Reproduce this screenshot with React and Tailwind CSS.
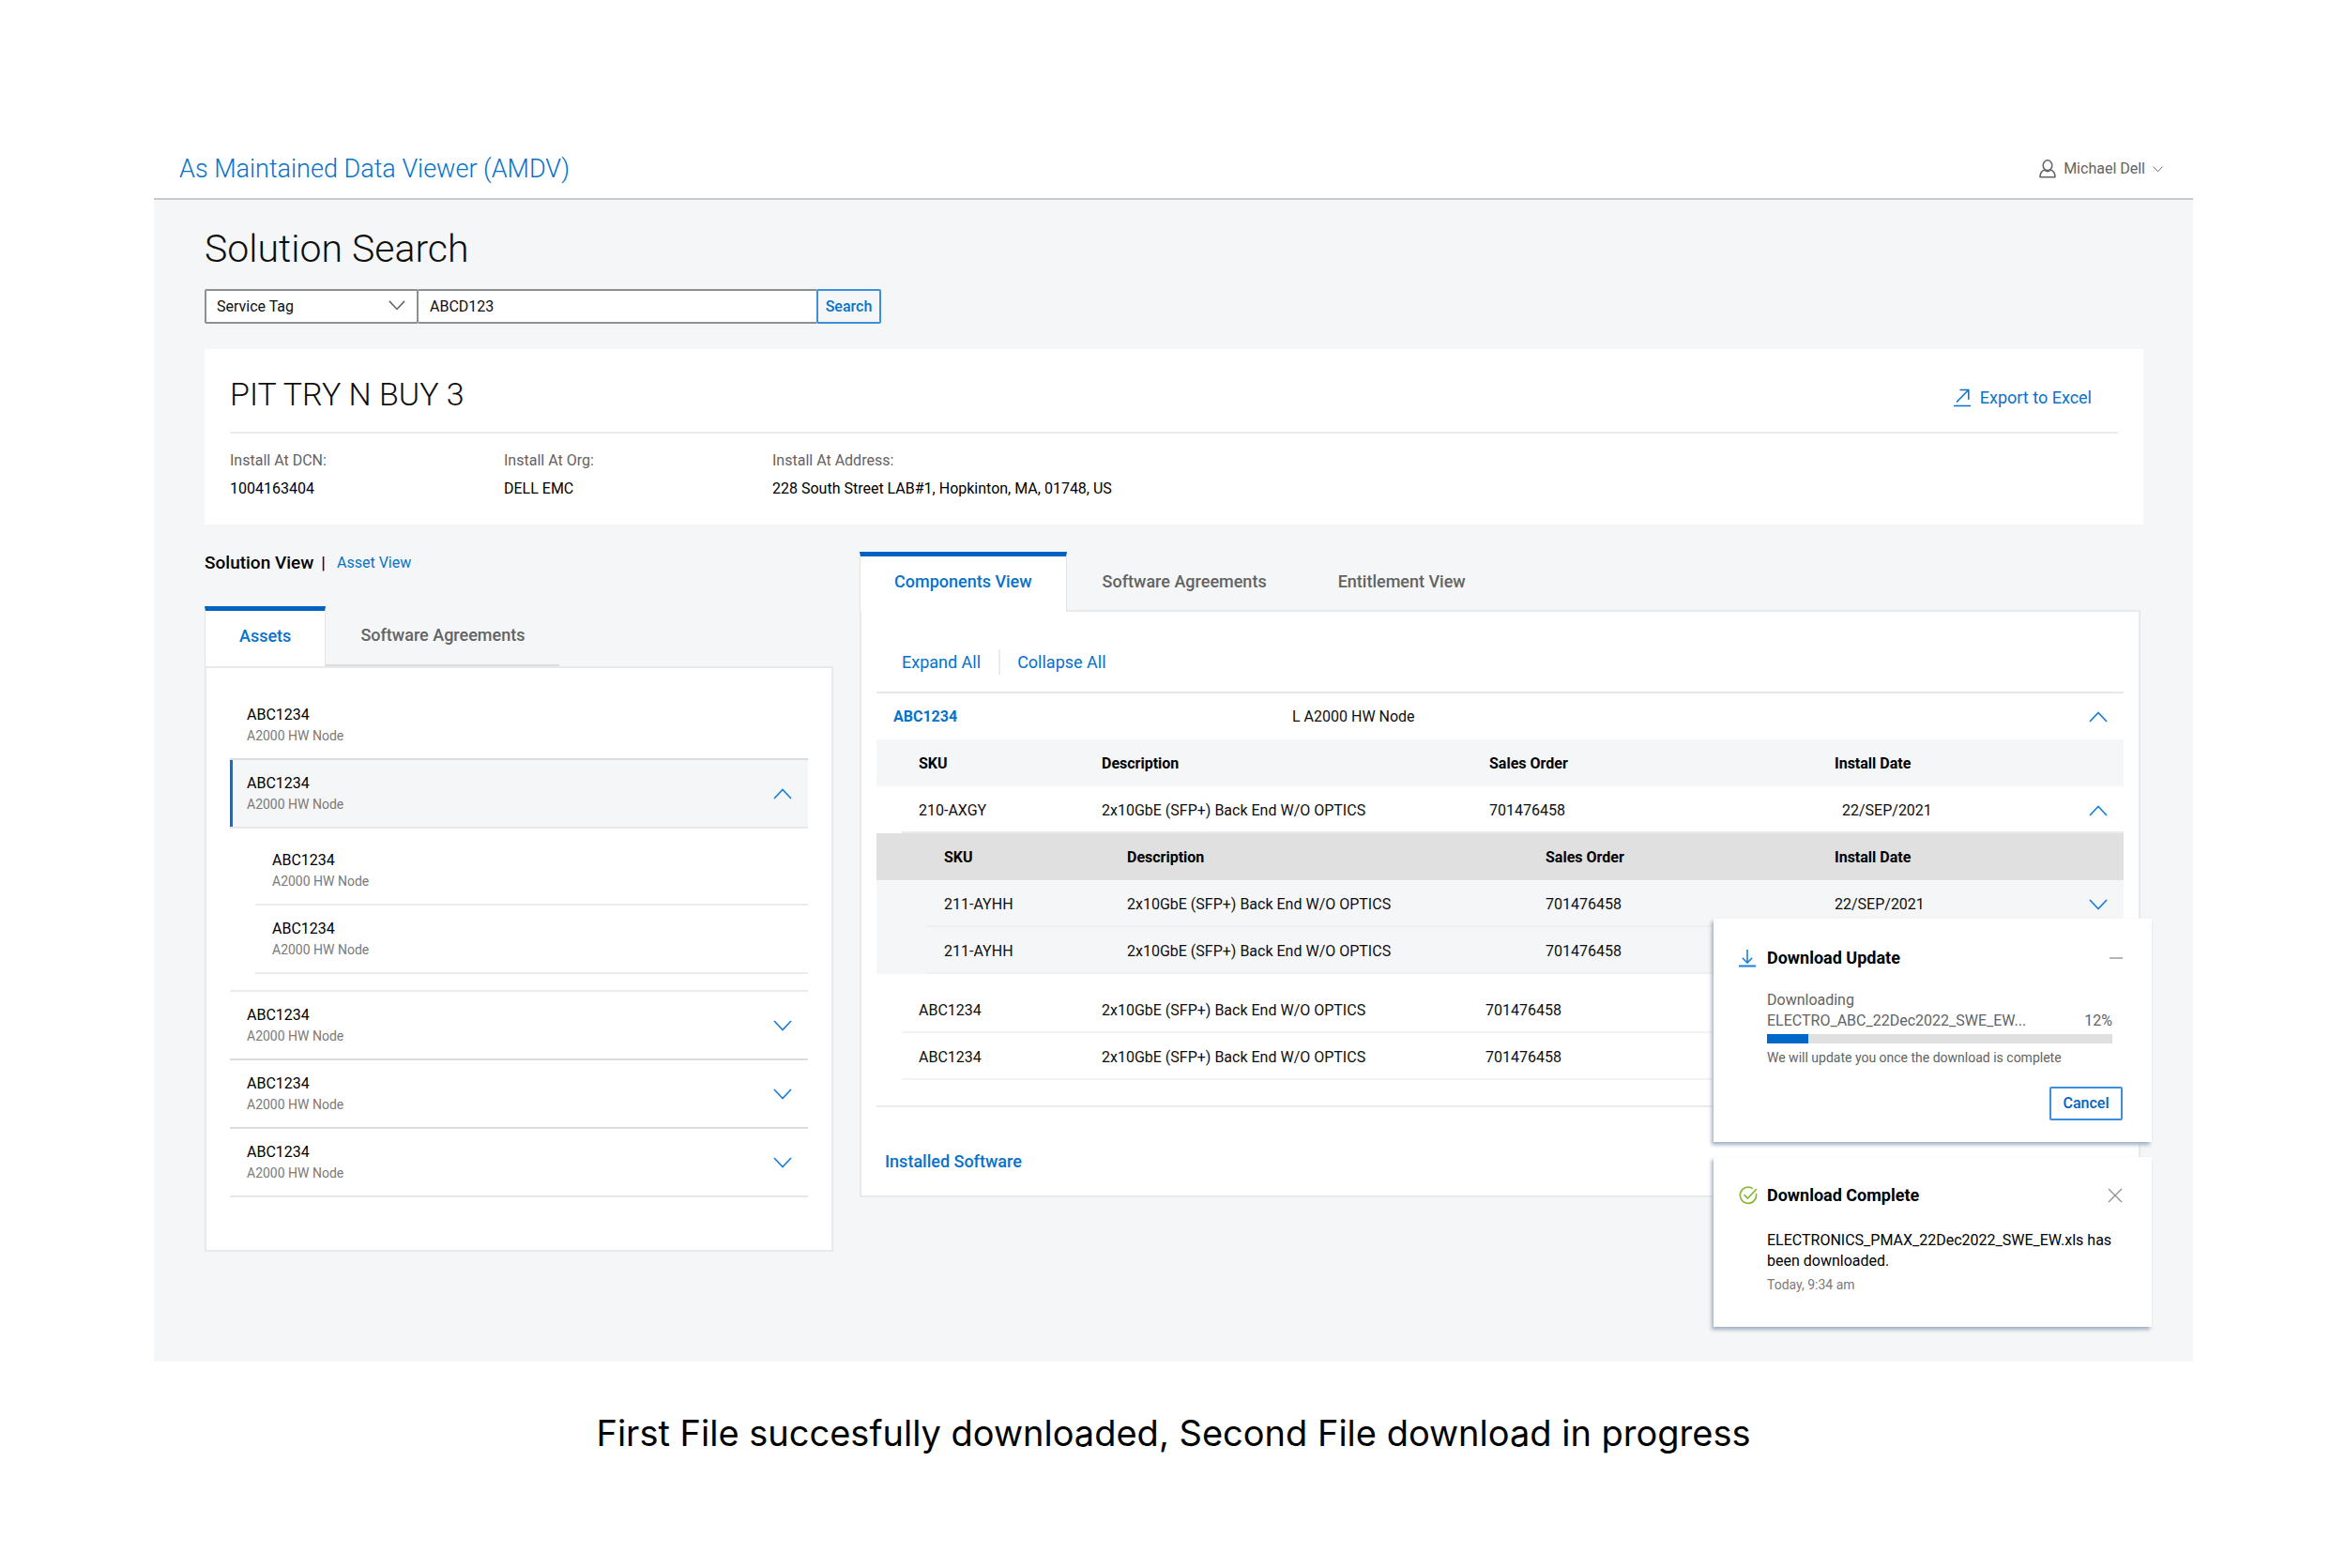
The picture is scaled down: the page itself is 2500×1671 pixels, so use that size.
import { useState } from 'react';

const ASSETS = [
  { id: 1, name: 'ABC1234', type: 'A2000 HW Node', line: 'border-[#dcdcdc]' },
  {
    id: 2,
    name: 'ABC1234',
    type: 'A2000 HW Node',
    line: 'border-[#e8e8e8]',
    children: [
      { id: 21, name: 'ABC1234', type: 'A2000 HW Node' },
      { id: 22, name: 'ABC1234', type: 'A2000 HW Node' },
    ],
  },
  { id: 3, name: 'ABC1234', type: 'A2000 HW Node', line: 'border-[#dcdcdc]', children: [] },
  { id: 4, name: 'ABC1234', type: 'A2000 HW Node', line: 'border-[#dcdcdc]', children: [] },
  { id: 5, name: 'ABC1234', type: 'A2000 HW Node', line: 'border-[#e8e8e8]', children: [] },
];

const OPTICS = '2x10GbE (SFP+) Back End W/O OPTICS';

const SKU_ROWS = [{ sku: '210-AXGY', description: OPTICS, order: '701476458', date: '22/SEP/2021', open: true }];

const NESTED_ROWS = [
  { sku: '211-AYHH', description: OPTICS, order: '701476458', date: '22/SEP/2021', open: false },
  { sku: '211-AYHH', description: OPTICS, order: '701476458' },
];

const MORE_ROWS = [
  { sku: 'ABC1234', description: OPTICS, order: '701476458' },
  { sku: 'ABC1234', description: OPTICS, order: '701476458' },
];

function Chevron({ up = false, className = 'w-5 text-[#1a7fd9]' }) {
  return (
    <svg viewBox="0 0 20 12" fill="none" stroke="currentColor" strokeWidth="1.7" className={className} aria-hidden="true">
      <path d={up ? 'M1 11 10 1.5 19 11' : 'M1 1 10 10.5 19 1'} />
    </svg>
  );
}

function UserIcon() {
  return (
    <svg viewBox="0 0 18 20" fill="none" stroke="currentColor" strokeWidth="1.5" className="h-5 w-[18px]" aria-hidden="true">
      <ellipse cx="9" cy="6.2" rx="4.8" ry="5.4" />
      <path d="M6.4 10.8C3 11.8 1 14.4 1 18.8h16c0-4.4-2-7-5.4-8" strokeLinejoin="round" />
      <path d="M6 11.5c1.8 1.5 4.2 1.5 6 0" />
    </svg>
  );
}

function ExportIcon() {
  return (
    <svg viewBox="0 0 18 20" fill="none" stroke="currentColor" strokeWidth="1.5" className="h-5 w-[18px]" aria-hidden="true">
      <path d="M3 14.5 15.5 1.8M6.5 1.5h9.300v10.500" />
      <path d="M0 18.5h18" />
    </svg>
  );
}

function DownloadIcon() {
  return (
    <svg viewBox="0 0 18 19" fill="none" stroke="currentColor" strokeWidth="1.6" className="h-[19px] w-[18px]" aria-hidden="true">
      <path d="M9 0v13M3.800 8.800 9 14l5.200-5.200" />
      <path d="M0 17.5h18" strokeWidth="2" />
    </svg>
  );
}

function CompleteIcon() {
  return (
    <svg viewBox="0 0 20 20" fill="none" stroke="currentColor" strokeWidth="1.7" className="size-5" aria-hidden="true">
      <path d="M14.8 2.600A8.600 8.600 0 1 0 18.400 8" />
      <path d="m5.500 9.200 3.900 3.900L19 3" />
    </svg>
  );
}

function CloseIcon() {
  return (
    <svg viewBox="0 0 16 16" fill="none" stroke="currentColor" strokeWidth="1.3" className="size-4" aria-hidden="true">
      <path d="m1 1 14 14M15 1 1 15" />
    </svg>
  );
}

function Header() {
  return (
    <header className="flex h-16 items-center justify-between border-b-2 border-[#c8c9cb] pr-8 pl-[27px]">
      <a href="#" className="text-[27px] leading-9 font-light text-[#0672cb]">
        As Maintained Data Viewer (AMDV)
      </a>
      <button className="flex items-center gap-2 text-base text-[#636363]">
        <UserIcon />
        Michael Dell
        <Chevron className="w-[11px]" />
      </button>
    </header>
  );
}

function SearchBar() {
  const [tag, setTag] = useState('ABCD123');

  return (
    <form className="mt-[19px] flex h-[37px] text-base text-[#0e0e0e]" onSubmit={(e) => e.preventDefault()}>
      <div className="relative w-[228px]">
        <select aria-label="Search by" className="h-full w-full appearance-none rounded-xs border-2 border-[#8f8f8f] bg-white pl-[11px]">
          <option>Service Tag</option>
        </select>
        <Chevron className="pointer-events-none absolute top-3 right-[14px] w-[18px] text-[#636363]" />
      </div>
      <input
        aria-label="Service tag"
        value={tag}
        onChange={(e) => setTag(e.target.value)}
        className="w-[424px] border-y-2 border-[#8f8f8f] bg-white px-3"
      />
      <button className="w-[69px] rounded-xs border-2 border-[#3d8fdc] font-medium text-[#0672cb]">Search</button>
    </form>
  );
}

function Detail({ label, value, className }) {
  return (
    <div className={className}>
      <dt className="text-[#636363]">{label}</dt>
      <dd className="mt-[6px] text-black">{value}</dd>
    </div>
  );
}

function SiteCard() {
  return (
    <section className="mt-[27px] bg-white px-[27px] pt-6 pb-[26px]">
      <div className="flex items-end justify-between border-b-2 border-[#ebebeb] pb-4">
        <h2 className="text-[34px] leading-[48px] font-light text-[#0e0e0e]">PIT TRY N BUY 3</h2>
        <button className="flex h-10 items-center gap-[10px] pr-7 text-lg text-[#0672cb]">
          <ExportIcon />
          Export to Excel
        </button>
      </div>
      <dl className="mt-[17px] flex text-base leading-6">
        <Detail label="Install At DCN:" value="1004163404" className="w-[292px]" />
        <Detail label="Install At Org:" value="DELL EMC" className="w-[286px]" />
        <Detail label="Install At Address:" value="228 South Street LAB#1, Hopkinton, MA, 01748, US" />
      </dl>
    </section>
  );
}

function Tab({ active = false, className = 'px-[38px]', children }) {
  return (
    <button
      role="tab"
      aria-selected={active}
      className={`h-16 pb-[5px] text-lg font-medium ${
        active
          ? 'border-x border-t-5 border-x-[#e4e4e4] border-t-[#0063c3] bg-white text-[#0672cb]'
          : 'pt-[5px] text-[#636363]'
      } ${className}`}
    >
      {children}
    </button>
  );
}

function AssetText({ asset }) {
  return (
    <div>
      <p className="text-base leading-[22px] text-black">{asset.name}</p>
      <p className="text-sm leading-[22px] text-[#7a7a7a]">{asset.type}</p>
    </div>
  );
}

function AssetRow({ asset, open, onToggle }) {
  return (
    <li>
      <button
        onClick={onToggle}
        className={`flex h-[73px] w-full items-center justify-between border-b-2 pr-[17px] pl-[18px] text-left ${asset.line} ${
          open ? 'bg-[#f5f6f7] shadow-[inset_3px_0_0_#0672cb]' : ''
        }`}
      >
        <AssetText asset={asset} />
        {asset.children && <Chevron up={open} />}
      </button>
      {open && (
        <ul className="border-b-2 border-[#ebebeb] pt-[9px] pb-[17px] pl-[27px]">
          {asset.children.map((child) => (
            <li key={child.id} className="flex h-[73px] items-center border-b-2 border-[#ebebeb] pl-[18px]">
              <AssetText asset={child} />
            </li>
          ))}
        </ul>
      )}
    </li>
  );
}

function AssetsPanel() {
  const [openId, setOpenId] = useState(2);

  return (
    <section className="w-[670px] shrink-0">
      <div className="flex items-center gap-2 text-[19px] leading-6 text-black">
        <span className="font-medium">Solution View</span>
        <span>|</span>
        <a href="#" className="ml-1 text-base leading-6 text-[#0672cb]">
          Asset View
        </a>
      </div>
      <div role="tablist" className="mt-[34px] flex">
        <Tab active className="px-9">
          Assets
        </Tab>
        <Tab className="border-b-2 border-[#dcdcdc] px-[37px]">Software Agreements</Tab>
      </div>
      <div className="border-2 border-[#e8e9ea] bg-white px-[25px] pt-[25px] pb-14">
        <ul>
          {ASSETS.map((asset) => (
            <AssetRow
              key={asset.id}
              asset={asset}
              open={asset.id === openId}
              onToggle={() => asset.children && setOpenId(asset.id === openId ? null : asset.id)}
            />
          ))}
        </ul>
      </div>
    </section>
  );
}

// The first column is a spacer, so row lines start at the indent of the level.
function SkuTable({ label, rows, cols, headClass, rowClass = '', lineClass, dateClass = 'pl-[18px]' }) {
  return (
    <table
      aria-label={label}
      className={`w-full table-fixed border-separate border-spacing-0 text-left text-base text-[#0e0e0e] ${rowClass}`}
    >
      <colgroup>
        {cols.map((c, i) => (
          <col key={i} className={c} />
        ))}
        <col />
        <col className="w-[60px]" />
      </colgroup>
      {headClass && (
        <thead>
          <tr className={`h-[50px] text-black ${headClass}`}>
            <td />
            <th className="pt-[2px] pl-[18px] font-bold">SKU</th>
            <th className="pt-[2px] pl-[18px] font-bold">Description</th>
            <th className="pt-[2px] pl-[18px] font-bold">Sales Order</th>
            <th className="pt-[2px] pl-[18px] font-bold">Install Date</th>
            <td />
          </tr>
        </thead>
      )}
      <tbody>
        {rows.map((row, i) => (
          <tr key={i} className="h-[50px]">
            <td />
            <td className={`border-b-2 pt-1 pl-[18px] ${lineClass}`}>{row.sku}</td>
            <td className={`border-b-2 pt-1 pl-[18px] ${lineClass}`}>{row.description}</td>
            <td className={`border-b-2 pt-1 pl-[18px] ${lineClass}`}>{row.order}</td>
            <td className={`border-b-2 pt-1 ${dateClass} ${lineClass}`}>{row.date}</td>
            <td className={`border-b-2 pt-1 pr-[17px] ${lineClass}`}>
              {row.date && (
                <button aria-label="Toggle details" className="ml-auto block">
                  <Chevron up={row.open} />
                </button>
              )}
            </td>
          </tr>
        ))}
      </tbody>
    </table>
  );
}

function ComponentsPanel() {
  return (
    <section className="mr-[3px] min-w-0 flex-1">
      <div role="tablist" className="relative -mb-[2px] flex">
        <Tab active className="px-9">
          Components View
        </Tab>
        <Tab>Software Agreements</Tab>
        <Tab>Entitlement View</Tab>
      </div>
      <div className="border-2 border-[#e8e9ea] bg-white px-4 pt-10 pb-6">
        <div className="flex h-[27px] items-stretch pl-[27px] text-lg text-[#0672cb]">
          <button className="border-r-2 border-[#ebebeb] pr-[19px]">Expand All</button>
          <button className="pl-[18px]">Collapse All</button>
        </div>

        <div className="mt-[18px] flex h-[51px] items-center border-t-2 border-[#e8e8e8] pr-[17px] pl-[18px] text-base">
          <a href="#" className="w-[425px] font-bold text-[#0672cb]">
            ABC1234
          </a>
          <span className="flex-1 text-[#0e0e0e]">L A2000 HW Node</span>
          <button aria-label="Collapse ABC1234">
            <Chevron up />
          </button>
        </div>

        <SkuTable
          label="Components"
          rows={SKU_ROWS}
          cols={['w-[27px]', 'w-[195px]', 'w-[413px]', 'w-[368px]']}
          headClass="bg-[#f5f6f7]"
          lineClass="border-[#ebebeb]"
          dateClass="pl-[26px]"
        />
        <SkuTable
          label="Sub components"
          rows={NESTED_ROWS}
          cols={['w-[54px]', 'w-[195px]', 'w-[446px]', 'w-[308px]']}
          headClass="bg-[#e0e0e0]"
          rowClass="bg-[#f5f6f7]"
          lineClass="border-[#eeeff0]"
        />
        <div className="border-b-2 border-[#ebebeb] pt-[13px] pb-[27px]">
          <SkuTable
            label="Other components"
            rows={MORE_ROWS}
            cols={['w-[27px]', 'w-[195px]', 'w-[409px]', 'w-[372px]']}
            lineClass="border-[#f3f3f3]"
          />
        </div>

        <button className="mt-[46px] block pl-[9px] text-lg leading-6 font-medium text-[#0672cb]">Installed Software</button>
      </div>
    </section>
  );
}

function Toast({ icon, title, action, className = '', children }) {
  return (
    <div role="status" className={`bg-white pr-[31px] pl-[27px] shadow-[-2px_3px_4px_#9fb0c3] ${className}`}>
      <div className="flex h-7 items-center text-lg text-black">
        <span className="w-[30px]">{icon}</span>
        <h3 className="flex-1 font-bold">{title}</h3>
        {action}
      </div>
      <div className="pl-[30px]">{children}</div>
    </div>
  );
}

function Downloads() {
  const percent = 12;

  return (
    <div className="absolute right-11 bottom-[37px] flex w-[467px] flex-col gap-4">
      <Toast
        className="h-[238px] pt-7"
        title="Download Update"
        icon={
          <span className="text-[#1a7fd9]">
            <DownloadIcon />
          </span>
        }
        action={<button aria-label="Minimise" className="h-[2px] w-[14px] bg-[#b5b5b5]" />}
      >
        <div className="mt-5 mr-[11px] text-base leading-[22px] text-[#636363]">
          <p>Downloading</p>
          <div className="flex justify-between">
            <p>ELECTRO_ABC_22Dec2022_SWE_EW...</p>
            <p>{percent}%</p>
          </div>
          <div
            role="progressbar"
            aria-label="Download progress"
            aria-valuenow={percent}
            className="mt-[3px] h-[10px] bg-[#e0e0e0]"
          >
            <div className="h-full bg-[#0068c9]" style={{ width: `${percent}%` }} />
          </div>
          <p className="mt-1 text-sm leading-[22px]">We will update you once the download is complete</p>
        </div>
        <button className="mt-5 ml-auto block h-9 w-[78px] rounded-xs border-2 border-[#3d8fdc] text-base font-medium text-[#0063c3]">
          Cancel
        </button>
      </Toast>

      <Toast
        className="h-[181px] pt-[27px]"
        title="Download Complete"
        icon={
          <span className="text-[#8ab833]">
            <CompleteIcon />
          </span>
        }
        action={
          <button aria-label="Dismiss" className="text-[#8f8f8f]">
            <CloseIcon />
          </button>
        }
      >
        <p className="mt-[23px] text-base leading-[22px] text-black">
          ELECTRONICS_PMAX_22Dec2022_SWE_EW.xls has
          <br />
          been downloaded.
        </p>
        <p className="mt-[3px] text-sm leading-[22px] text-[#7a7a7a]">Today, 9:34 am</p>
      </Toast>
    </div>
  );
}

export default function App() {
  return (
    <div className="min-h-screen bg-white pt-[149px] pr-[163px] pl-[164px] font-[Roboto,sans-serif]">
      <Header />
      <main className="relative bg-[#f5f6f7] pt-7 pr-[53px] pb-[117px] pl-[54px]">
        <h1 className="text-[41px] leading-[48px] font-light text-[#0e0e0e]">Solution Search</h1>
        <SearchBar />
        <SiteCard />
        <div className="mt-[29px] flex items-start gap-7">
          <AssetsPanel />
          <ComponentsPanel />
        </div>
        <Downloads />
      </main>
      <p className="mt-[50px] text-center font-[Inter,sans-serif] text-[38px] leading-[52px] text-black">
        First File succesfully downloaded, Second File download in progress
      </p>
    </div>
  );
}
